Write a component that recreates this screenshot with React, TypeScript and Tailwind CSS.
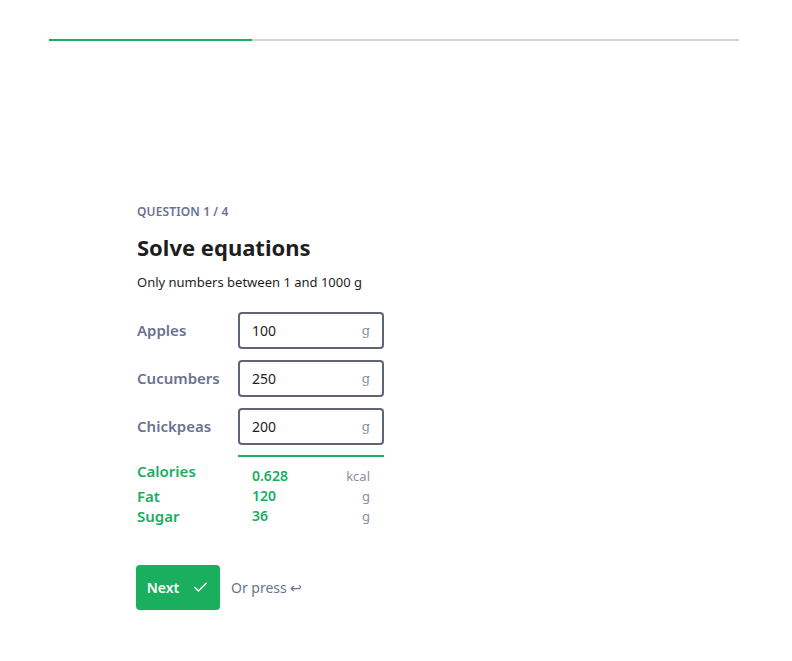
import { Check } from "lucide-react";

const rows = [
  { label: "Apples", value: "100" },
  { label: "Cucumbers", value: "250" },
  { label: "Chickpeas", value: "200" },
];

const results = [
  { label: "Calories", value: "0.628", unit: "kcal" },
  { label: "Fat", value: "120", unit: "g" },
  { label: "Sugar", value: "36", unit: "g" },
];

export default function App() {
  return (
    <div
      className="w-[792px] h-[661px] bg-white relative"
      style={{ fontFamily: '"Noto Sans", "Open Sans", sans-serif' }}
    >
      {/* progress */}
      <div className="pt-[39px] px-[49px]">
        <div className="flex h-[2px] w-[690px] bg-[#d4d4d8]">
          <div className="h-full w-[203px] bg-[#1aae5f]" />
        </div>
      </div>

      <div className="pl-[137px] pt-[163px]">
        <div className="text-[12px] font-semibold tracking-[0.01em] text-[#6b7190] leading-[16px]">
          QUESTION 1 / 4
        </div>
        <h1 className="mt-[13px] text-[22px] font-bold text-[#1e1e1e] leading-[28px]">
          Solve equations
        </h1>
        <p className="mt-[12px] text-[13px] text-[#1e1e1e] leading-[18px]">
          Only numbers between 1 and 1000 g
        </p>

        <div className="mt-[21px] flex flex-col gap-[11px]">
          {rows.map((r) => (
            <div key={r.label} className="flex items-center">
              <div className="w-[101px] text-[15px] font-semibold text-[#6b7190]">
                {r.label}
              </div>
              <div className="flex h-[37px] w-[146px] items-center justify-between rounded-[4px] border-2 border-[#5f6479] pl-[12px] pr-[12px]">
                <span className="text-[14px] text-[#1e1e1e]">{r.value}</span>
                <span
                  className="text-[13px] text-[#8a8ea3]"
                  style={{ fontFamily: '"DejaVu Serif", serif' }}
                >
                  g
                </span>
              </div>
            </div>
          ))}
        </div>

        <div className="ml-[101px] mt-[10px] h-[2px] w-[146px] bg-[#1aae5f]" />

        <div className="mt-[4px] flex flex-col">
          {results.map((r, i) => (
            <div key={r.label} className="flex items-start">
              <div className="w-[101px] text-[15px] font-semibold text-[#1aae5f] leading-[20px]">
                {r.label}
              </div>
              <div
                className={`flex w-[132px] justify-between pl-[14px] ${
                  i === 0 ? "pt-[5px]" : ""
                }`}
              >
                <span className="text-[14px] font-semibold text-[#1aae5f] leading-[20px]">
                  {r.value}
                </span>
                <span className="text-[13px] text-[#8a8ea3] leading-[20px]">
                  {r.unit}
                </span>
              </div>
            </div>
          ))}
        </div>

        <div className="mt-[39px] flex items-center gap-[11px] -ml-[1px]">
          <button className="flex h-[45px] w-[84px] items-center justify-center gap-[13px] rounded-[4px] bg-[#1aae5f] text-[14px] font-semibold text-white">
            Next
            <Check size={17} strokeWidth={2} />
          </button>
          <span className="text-[14px] text-[#6b7190]">Or press ↩</span>
        </div>
      </div>
    </div>
  );
}
